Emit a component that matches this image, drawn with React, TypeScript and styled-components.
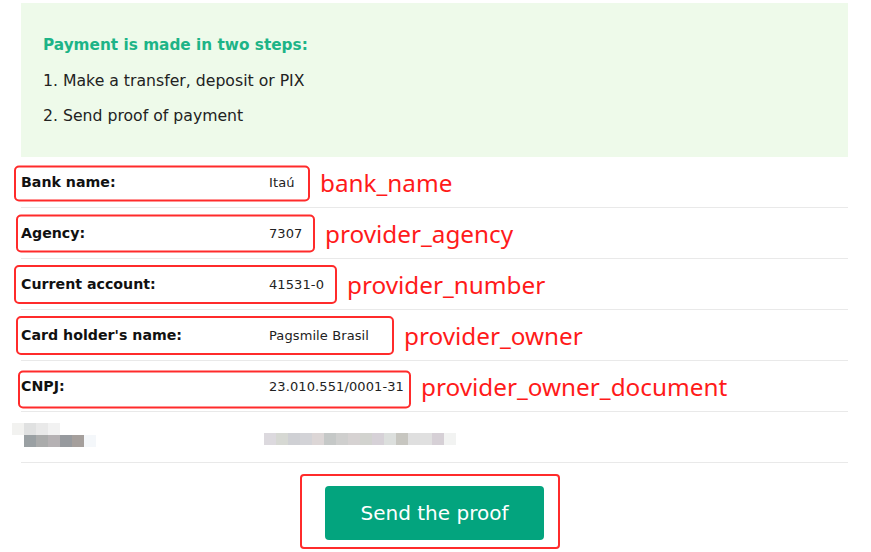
import React from "react";
import styled, { createGlobalStyle } from "styled-components";

const GlobalStyle = createGlobalStyle`
  body {
    margin: 0;
    background: #ffffff;
    font-family: "DejaVu Sans", "Noto Sans", sans-serif;
    color: #1a1a1a;
  }
`;

const Wrapper = styled.div`
  width: 827px;
  padding: 3px 0 0 21px;
`;

const Steps = styled.div`
  background: #eefaea;
  padding: 25px 22px 24px;
`;

const StepsTitle = styled.div`
  line-height: 35px;
  font-size: 15.3px;
  font-weight: 700;
  color: #1db487;
`;

const Step = styled.div`
  line-height: 35px;
  font-size: 15.7px;
  color: #222;
`;

const Row = styled.div`
  display: flex;
  align-items: center;
  height: 50px;
  border-bottom: 1px solid #e9e9e9;
`;

const Field = styled.div<{ $pl: number; $pr: number; $h: number; $dy: number }>`
  position: relative;
  display: flex;
  align-items: center;

  &::before {
    content: "";
    position: absolute;
    left: ${(p) => -p.$pl - 2}px;
    right: ${(p) => -p.$pr - 2}px;
    top: 50%;
    height: ${(p) => p.$h}px;
    transform: translateY(calc(-50% + ${(p) => p.$dy}px));
    border: 2px solid #ff2b2b;
    border-radius: 5px;
    box-sizing: border-box;
  }
`;

const Label = styled.span`
  width: 248px;
  font-size: 14.2px;
  font-weight: 700;
  color: #111;
`;

const Value = styled.span<{ $w: number }>`
  width: ${(p) => p.$w}px;
  white-space: nowrap;
  font-size: 13px;
  letter-spacing: 0.1px;
  color: #222;
`;

const Note = styled.span<{ $gap: number }>`
  margin-left: ${(p) => p.$gap}px;
  font-family: "Noto Sans", "Open Sans", sans-serif;
  font-size: 24.3px;
  color: #ff1a1a;
`;

const Mosaic = styled.div`
  display: flex;
  flex-direction: column;
  filter: blur(0.6px);
`;

const MosaicLine = styled.div<{ $indent: number }>`
  display: flex;
  margin-left: ${(p) => p.$indent}px;
`;

const Tile = styled.span<{ $c: string }>`
  width: 12px;
  height: 12px;
  background: ${(p) => p.$c};
`;

const HiddenRow = styled(Row)`
  align-items: flex-start;
  padding-top: 11px;
  height: 39px;
`;

const LeftBlur = styled.div`
  width: 252px;
  margin-left: -9px;
`;

const RightBlur = styled.div`
  padding-top: 10px;
`;

const Footer = styled.div`
  display: flex;
  justify-content: center;
  padding-top: 11px;
`;

const Highlight = styled.div`
  margin-right: 9px;
  padding: 10px 14px 7px 23px;
  border: 2px solid #ff2b2b;
  border-radius: 4px;
`;

const Button = styled.button`
  width: 219px;
  height: 54px;
  border: none;
  border-radius: 4px;
  background: #03a47e;
  color: #ffffff;
  font-family: "DejaVu Sans", "Noto Sans", sans-serif;
  font-size: 20px;
  cursor: pointer;
`;

const rows = [
  { label: "Bank name:", value: "Itaú", w: 30, note: "bank_name", pl: 5, pr: 9, h: 36, dy: 1.5 },
  { label: "Agency:", value: "7307", w: 36, note: "provider_agency", pl: 3, pr: 8, h: 38, dy: 0.5 },
  { label: "Current account:", value: "41531-0", w: 54, note: "provider_number", pl: 5, pr: 12, h: 39, dy: 0.5 },
  { label: "Card holder's name:", value: "Pagsmile Brasil", w: 118, note: "provider_owner", pl: 3, pr: 5, h: 39, dy: 0.5 },
  { label: "CNPJ:", value: "23.010.551/0001-31", w: 133, note: "provider_owner_document", pl: 1, pr: 7, h: 38, dy: 3.5 },
];

const leftTop = ["#f2f2f0", "#e0e1e1", "#e9e9e9", "#f2f2f2"];
const leftBottom = ["#9aa0a3", "#aaabab", "#b5b1b3", "#979a9e", "#a59f9c", "#f4f7fa"];
const rightTiles = [
  "#dcd9de", "#d6d8d3", "#cfd0d4", "#d3d3d7", "#dcd6d6", "#c5c8c7", "#cfcfce", "#d6d2d2",
  "#d2d3cf", "#d6d1d7", "#dcdfdd", "#c7c6c0", "#dfdfdf", "#e0e0e0", "#d6d0d6", "#f2f3f2",
];

const App: React.FC = () => {
  return (
    <Wrapper>
      <GlobalStyle />
      <Steps>
        <StepsTitle>Payment is made in two steps:</StepsTitle>
        <Step>1. Make a transfer, deposit or PIX</Step>
        <Step>2. Send proof of payment</Step>
      </Steps>
      {rows.map((r) => (
        <Row key={r.note}>
          <Field $pl={r.pl} $pr={r.pr} $h={r.h} $dy={r.dy}>
            <Label>{r.label}</Label>
            <Value $w={r.w}>{r.value}</Value>
          </Field>
          <Note $gap={r.pr + 12}>{r.note}</Note>
        </Row>
      ))}
      <HiddenRow>
        <LeftBlur>
          <Mosaic>
            <MosaicLine $indent={0}>
              {leftTop.map((c, i) => (
                <Tile key={i} $c={c} />
              ))}
            </MosaicLine>
            <MosaicLine $indent={12}>
              {leftBottom.map((c, i) => (
                <Tile key={i} $c={c} />
              ))}
            </MosaicLine>
          </Mosaic>
        </LeftBlur>
        <RightBlur>
          <Mosaic>
            <MosaicLine $indent={0}>
              {rightTiles.map((c, i) => (
                <Tile key={i} $c={c} />
              ))}
            </MosaicLine>
          </Mosaic>
        </RightBlur>
      </HiddenRow>
      <Footer>
        <Highlight>
          <Button>Send the proof</Button>
        </Highlight>
      </Footer>
    </Wrapper>
  );
};

export default App;
